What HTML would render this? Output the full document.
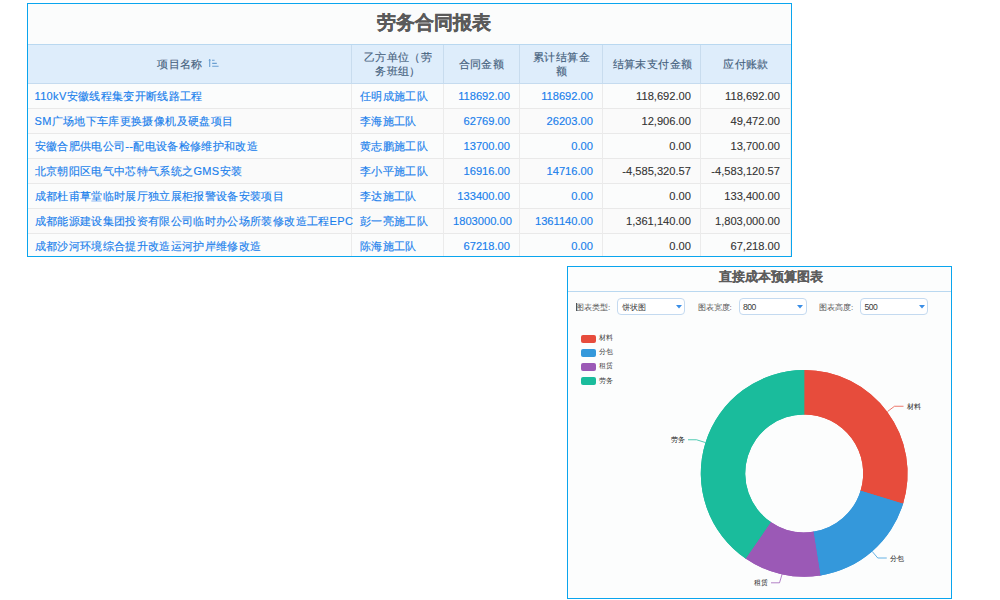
<!DOCTYPE html><html><head><meta charset="utf-8"><style>
*{margin:0;padding:0;box-sizing:border-box}
html,body{width:1000px;height:600px;overflow:hidden;background:#fff;font-family:"Liberation Sans",sans-serif}
.a{position:absolute;white-space:nowrap}
.t{font-size:11px;line-height:14px;letter-spacing:0.35px}
.n{font-size:11.15px;letter-spacing:0}
.lk{color:#1a80ec;-webkit-text-stroke:0.15px #1a80ec}
.dk{color:#333;-webkit-text-stroke:0.1px #333}
.hd{color:#46627e;text-align:center;-webkit-text-stroke:0.15px #46627e}
</style></head><body>

<div class="a" style="left:27px;top:3px;width:765px;height:254px;border:1px solid #0aa5ee;background:#fbfcfc"></div>
<div class="a" style="left:28px;top:44px;width:763px;height:40px;background:#deedfb;border-top:1px solid #b9d8f0;border-bottom:1px solid #c5dbef"></div>
<div class="a" style="left:377px;top:10px;font-size:19.3px;font-weight:bold;color:#5a5a5a;-webkit-text-stroke:0.3px #5a5a5a;line-height:26px">劳务合同报表</div>
<div class="a" style="left:28px;top:84px;width:762px;height:24px;background:#fbfcfc"></div>
<div class="a" style="left:28px;top:108px;width:762px;height:1px;background:#e9e9e9"></div>
<div class="a" style="left:28px;top:109px;width:762px;height:24px;background:#fafafa"></div>
<div class="a" style="left:28px;top:133px;width:762px;height:1px;background:#e9e9e9"></div>
<div class="a" style="left:28px;top:134px;width:762px;height:24px;background:#fbfcfc"></div>
<div class="a" style="left:28px;top:158px;width:762px;height:1px;background:#e9e9e9"></div>
<div class="a" style="left:28px;top:159px;width:762px;height:24px;background:#fafafa"></div>
<div class="a" style="left:28px;top:183px;width:762px;height:1px;background:#e9e9e9"></div>
<div class="a" style="left:28px;top:184px;width:762px;height:24px;background:#fbfcfc"></div>
<div class="a" style="left:28px;top:208px;width:762px;height:1px;background:#e9e9e9"></div>
<div class="a" style="left:28px;top:209px;width:762px;height:24px;background:#fafafa"></div>
<div class="a" style="left:28px;top:233px;width:762px;height:1px;background:#e9e9e9"></div>
<div class="a" style="left:28px;top:234px;width:762px;height:22px;background:#fbfcfc"></div>
<div class="a" style="left:351px;top:45px;width:1px;height:38px;background:#c8dcee"></div>
<div class="a" style="left:351px;top:84px;width:1px;height:172px;background:#ebebeb"></div>
<div class="a" style="left:443px;top:45px;width:1px;height:38px;background:#c8dcee"></div>
<div class="a" style="left:443px;top:84px;width:1px;height:172px;background:#ebebeb"></div>
<div class="a" style="left:519px;top:45px;width:1px;height:38px;background:#c8dcee"></div>
<div class="a" style="left:519px;top:84px;width:1px;height:172px;background:#ebebeb"></div>
<div class="a" style="left:602px;top:45px;width:1px;height:38px;background:#c8dcee"></div>
<div class="a" style="left:602px;top:84px;width:1px;height:172px;background:#ebebeb"></div>
<div class="a" style="left:700px;top:45px;width:1px;height:38px;background:#c8dcee"></div>
<div class="a" style="left:700px;top:84px;width:1px;height:172px;background:#ebebeb"></div>
<div class="a" style="left:790px;top:84px;width:1px;height:172px;background:#efefef"></div>
<div class="a t hd" style="left:120px;width:120px;top:57px">项目名称</div>
<svg class="a" style="left:208px;top:58px" width="12" height="11" viewBox="0 0 12 11"><g stroke="#6a9fd2" stroke-width="1.1" fill="none"><path d="M1.7 1.2V9"/><path d="M4 2.2H6.6M4.2 5.4H8.8M4.2 8.3H10.6"/></g><path d="M0.4 2.6L1.7 0.9L3 2.6Z" fill="#6a9fd2"/></svg>
<div class="a t hd" style="left:338px;width:120px;top:50px">乙方单位（劳</div>
<div class="a t hd" style="left:338px;width:120px;top:64px">务班组）</div>
<div class="a t hd" style="left:421.5px;width:120px;top:57px">合同金额</div>
<div class="a t hd" style="left:501.5px;width:120px;top:50px">累计结算金</div>
<div class="a t hd" style="left:501.5px;width:120px;top:64px">额</div>
<div class="a t hd" style="left:592.5px;width:120px;top:57px">结算末支付金额</div>
<div class="a t hd" style="left:686px;width:120px;top:57px">应付账款</div>
<div class="a t lk" style="left:34.5px;top:89px">110kV安徽线程集变开断线路工程</div>
<div class="a t lk" style="left:360px;top:89px">任明成施工队</div>
<div class="a t n lk" style="right:490px;top:89px">118692.00</div>
<div class="a t n lk" style="right:407px;top:89px">118692.00</div>
<div class="a t n dk" style="right:309px;top:89px">118,692.00</div>
<div class="a t n dk" style="right:220px;top:89px">118,692.00</div>
<div class="a t lk" style="left:34.5px;top:114px">SM广场地下车库更换摄像机及硬盘项目</div>
<div class="a t lk" style="left:360px;top:114px">李海施工队</div>
<div class="a t n lk" style="right:490px;top:114px">62769.00</div>
<div class="a t n lk" style="right:407px;top:114px">26203.00</div>
<div class="a t n dk" style="right:309px;top:114px">12,906.00</div>
<div class="a t n dk" style="right:220px;top:114px">49,472.00</div>
<div class="a t lk" style="left:34.5px;top:139px">安徽合肥供电公司--配电设备检修维护和改造</div>
<div class="a t lk" style="left:360px;top:139px">黄志鹏施工队</div>
<div class="a t n lk" style="right:490px;top:139px">13700.00</div>
<div class="a t n lk" style="right:407px;top:139px">0.00</div>
<div class="a t n dk" style="right:309px;top:139px">0.00</div>
<div class="a t n dk" style="right:220px;top:139px">13,700.00</div>
<div class="a t lk" style="left:34.5px;top:164px">北京朝阳区电气中芯特气系统之GMS安装</div>
<div class="a t lk" style="left:360px;top:164px">李小平施工队</div>
<div class="a t n lk" style="right:490px;top:164px">16916.00</div>
<div class="a t n lk" style="right:407px;top:164px">14716.00</div>
<div class="a t n dk" style="right:309px;top:164px">-4,585,320.57</div>
<div class="a t n dk" style="right:220px;top:164px">-4,583,120.57</div>
<div class="a t lk" style="left:34.5px;top:189px">成都杜甫草堂临时展厅独立展柜报警设备安装项目</div>
<div class="a t lk" style="left:360px;top:189px">李达施工队</div>
<div class="a t n lk" style="right:490px;top:189px">133400.00</div>
<div class="a t n lk" style="right:407px;top:189px">0.00</div>
<div class="a t n dk" style="right:309px;top:189px">0.00</div>
<div class="a t n dk" style="right:220px;top:189px">133,400.00</div>
<div class="a t lk" style="left:34.5px;top:214px">成都能源建设集团投资有限公司临时办公场所装修改造工程EPC</div>
<div class="a t lk" style="left:360px;top:214px">彭一亮施工队</div>
<div class="a t n lk" style="left:453px;top:214px">1803000.00</div>
<div class="a t n lk" style="right:407px;top:214px">1361140.00</div>
<div class="a t n dk" style="right:309px;top:214px">1,361,140.00</div>
<div class="a t n dk" style="right:220px;top:214px">1,803,000.00</div>
<div class="a t lk" style="left:34.5px;top:239px">成都沙河环境综合提升改造运河护岸维修改造</div>
<div class="a t lk" style="left:360px;top:239px">陈海施工队</div>
<div class="a t n lk" style="right:490px;top:239px">67218.00</div>
<div class="a t n lk" style="right:407px;top:239px">0.00</div>
<div class="a t n dk" style="right:309px;top:239px">0.00</div>
<div class="a t n dk" style="right:220px;top:239px">67,218.00</div>
<div class="a" style="left:567px;top:266px;width:385px;height:333px;border:1px solid #0aa5ee;background:#fcfdfd"></div>
<div class="a" style="left:568px;top:291px;width:383px;height:1px;background:#b9d8f0"></div>
<div class="a" style="left:719px;top:268px;font-size:13.1px;font-weight:bold;color:#5c5c5c;-webkit-text-stroke:0.05px #5c5c5c;line-height:18px">直接成本预算图表</div>
<div class="a" style="left:576px;top:303px;font-size:8px;line-height:10px;color:#555">图表类型:</div>
<div class="a" style="left:617px;top:298px;width:68px;height:17px;border:1px solid #c4daf0;border-radius:4px;background:#fff"></div>
<div class="a" style="left:621.5px;top:303px;font-size:8px;line-height:10px;color:#3a3a3a">饼状图</div>
<svg class="a" style="left:675.5px;top:304.5px" width="6" height="4"><path d="M0 0H6L3 3.5Z" fill="#3a8ee6"/></svg>
<div class="a" style="left:697.5px;top:303px;font-size:8px;line-height:10px;color:#555">图表宽度:</div>
<div class="a" style="left:738.5px;top:298px;width:68px;height:17px;border:1px solid #c4daf0;border-radius:4px;background:#fff"></div>
<div class="a" style="left:743.0px;top:303px;font-size:8px;line-height:10px;color:#3a3a3a"><span style="font-size:8.6px;letter-spacing:-0.5px;position:relative;top:-1px">800</span></div>
<svg class="a" style="left:797.0px;top:304.5px" width="6" height="4"><path d="M0 0H6L3 3.5Z" fill="#3a8ee6"/></svg>
<div class="a" style="left:819px;top:303px;font-size:8px;line-height:10px;color:#555">图表高度:</div>
<div class="a" style="left:860px;top:298px;width:68px;height:17px;border:1px solid #c4daf0;border-radius:4px;background:#fff"></div>
<div class="a" style="left:864.5px;top:303px;font-size:8px;line-height:10px;color:#3a3a3a"><span style="font-size:8.6px;letter-spacing:-0.5px;position:relative;top:-1px">500</span></div>
<svg class="a" style="left:918.5px;top:304.5px" width="6" height="4"><path d="M0 0H6L3 3.5Z" fill="#3a8ee6"/></svg>
<div class="a" style="left:576px;top:303px;width:1px;height:8px;background:#555"></div>
<div class="a" style="left:581px;top:334.5px;width:15px;height:8.3px;border-radius:2px;background:#e74c3c"></div>
<div class="a" style="left:599px;top:333.0px;font-size:7px;line-height:10px;color:#3c3c3c">材料</div>
<div class="a" style="left:581px;top:348.7px;width:15px;height:8.3px;border-radius:2px;background:#3498db"></div>
<div class="a" style="left:599px;top:347.2px;font-size:7px;line-height:10px;color:#3c3c3c">分包</div>
<div class="a" style="left:581px;top:362.9px;width:15px;height:8.3px;border-radius:2px;background:#9b59b6"></div>
<div class="a" style="left:599px;top:361.4px;font-size:7px;line-height:10px;color:#3c3c3c">租赁</div>
<div class="a" style="left:581px;top:377.1px;width:15px;height:8.3px;border-radius:2px;background:#1abc9c"></div>
<div class="a" style="left:599px;top:375.6px;font-size:7px;line-height:10px;color:#3c3c3c">劳务</div>
<svg class="a" style="left:0;top:0" width="1000" height="600"><path d="M803.12 370.01A103.4 103.4 0 0 1 902.76 504.67L860.44 491.24A59 59 0 0 0 803.58 414.40Z" fill="#e74c3c"/><path d="M903.39 502.59A103.4 103.4 0 0 1 819.30 575.69L812.82 531.77A59 59 0 0 0 860.80 490.06Z" fill="#3498db"/><path d="M821.44 575.35A103.4 103.4 0 0 1 744.74 558.00L770.27 521.67A59 59 0 0 0 814.04 531.57Z" fill="#9b59b6"/><path d="M746.53 559.22A103.4 103.4 0 0 1 805.28 370.01L804.82 414.40A59 59 0 0 0 771.29 522.37Z" fill="#1abc9c"/><path d="M804.20 370.00A103.4 103.4 0 0 1 903.08 503.63L860.62 490.65A59 59 0 0 0 804.20 414.40Z" fill="#e74c3c"/><path d="M903.08 503.63A103.4 103.4 0 0 1 820.38 575.53L813.43 531.67A59 59 0 0 0 860.62 490.65Z" fill="#3498db"/><path d="M820.38 575.53A103.4 103.4 0 0 1 745.63 558.61L770.78 522.02A59 59 0 0 0 813.43 531.67Z" fill="#9b59b6"/><path d="M745.63 558.61A103.4 103.4 0 0 1 804.20 370.00L804.20 414.40A59 59 0 0 0 770.78 522.02Z" fill="#1abc9c"/><path d="M887.5 411.5L894.5 406.25L903.5 406.25" fill="none" stroke="#e74c3c" stroke-width="1" stroke-opacity="0.75"/><path d="M872.25 551.5L877.75 558L886.75 558" fill="none" stroke="#3498db" stroke-width="1" stroke-opacity="0.75"/><path d="M782 574.5L779.5 582.8L771 582.8" fill="none" stroke="#9b59b6" stroke-width="1" stroke-opacity="0.75"/><path d="M705.25 442.5L696.5 439.75L688 439.75" fill="none" stroke="#1abc9c" stroke-width="1" stroke-opacity="0.75"/></svg>
<div class="a" style="left:906.5px;top:401.5px;font-size:7px;line-height:10px;color:#333;-webkit-text-stroke:0.05px #333">材料</div>
<div class="a" style="left:889.5px;top:553.5px;font-size:7px;line-height:10px;color:#333;-webkit-text-stroke:0.05px #333">分包</div>
<div class="a" style="left:753.5px;top:578px;font-size:7px;line-height:10px;color:#333;-webkit-text-stroke:0.05px #333">租赁</div>
<div class="a" style="left:670.5px;top:435px;font-size:7px;line-height:10px;color:#333;-webkit-text-stroke:0.05px #333">劳务</div>
</body></html>
